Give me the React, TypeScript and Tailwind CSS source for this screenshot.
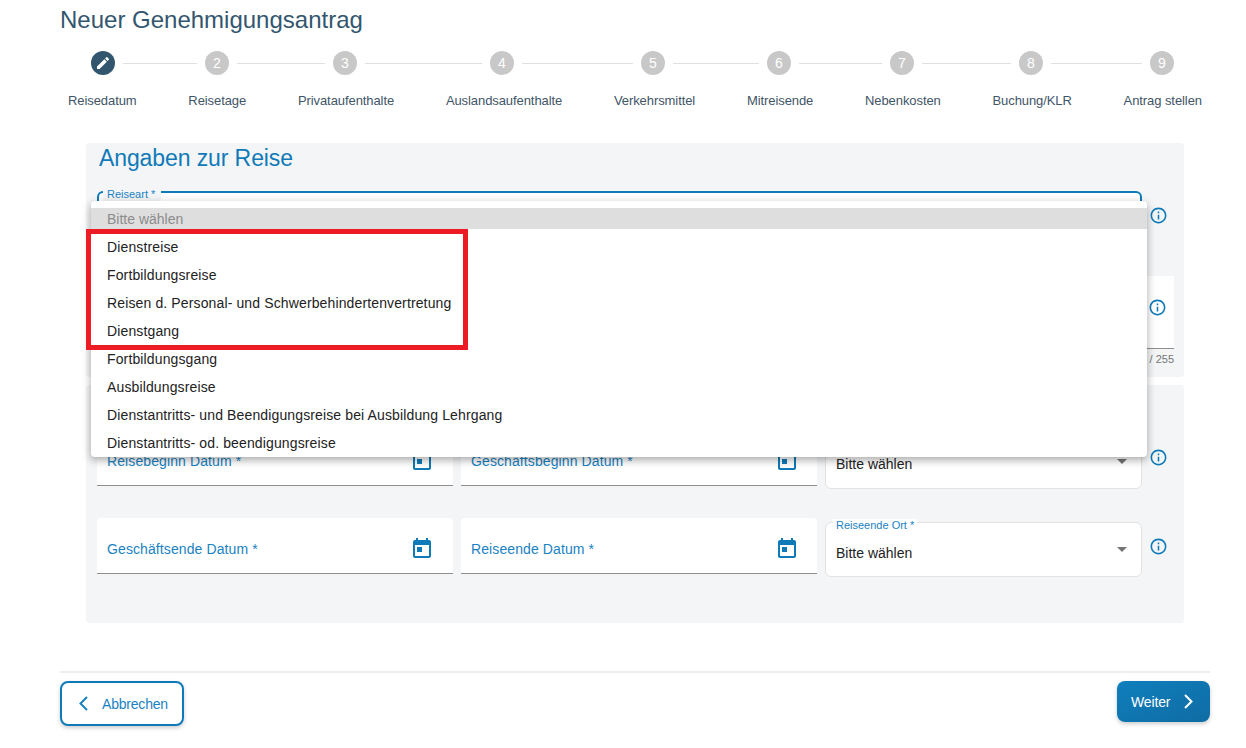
const font = "font-['Liberation_Sans',Arial,sans-serif]";

const steps = [
  { label: 'Reisedatum', line: 'w-[74px]' },
  { label: 'Reisetage', line: 'w-[88px]' },
  { label: 'Privataufenthalte', line: 'w-[117px]' },
  { label: 'Auslandsaufenthalte', line: 'w-[111px]' },
  { label: 'Verkehrsmittel', line: 'w-[86px]' },
  { label: 'Mitreisende', line: 'w-[83px]' },
  { label: 'Nebenkosten', line: 'w-[89px]' },
  { label: 'Buchung/KLR', line: 'w-[91px]' },
  { label: 'Antrag stellen', line: '' },
];

const options = [
  'Dienstreise',
  'Fortbildungsreise',
  'Reisen d. Personal- und Schwerbehindertenvertretung',
  'Dienstgang',
  'Fortbildungsgang',
  'Ausbildungsreise',
  'Dienstantritts- und Beendigungsreise bei Ausbildung Lehrgang',
  'Dienstantritts- od. beendigungsreise',
];

function InfoIcon() {
  return (
    <svg width="19" height="19" viewBox="0 0 24 24" fill="#0f7ab8" className="shrink-0">
      <path d="M11 7h2v2h-2zm0 4h2v6h-2zm1-9C6.48 2 2 6.48 2 12s4.48 10 10 10 10-4.48 10-10S17.52 2 12 2zm0 18c-4.41 0-8-3.59-8-8s3.59-8 8-8 8 3.59 8 8-3.59 8-8 8z" />
    </svg>
  );
}

function DateField({ label, right = 'pr-[19px]' }: { label: string; right?: string }) {
  return (
    <div className={`flex h-14 w-[356px] items-center justify-between rounded-t border-b border-[#8f8f8f] bg-white pt-[6px] pl-2.5 ${right}`}>
      <span className="text-sm tracking-[0.1px] text-[#1a82c2]">{label}</span>
      <svg width="24" height="24" viewBox="0 0 24 24" fill="#0f7ab8">
        <path d="M19 3h-1V1h-2v2H8V1H6v2H5c-1.11 0-1.99.9-1.99 2L3 19c0 1.1.89 2 2 2h14c1.1 0 2-.9 2-2V5c0-1.1-.9-2-2-2zm0 16H5V8h14v11zM7 10h5v5H7z" />
      </svg>
    </div>
  );
}

function SelectField({ label, infoTop = 'mt-3.5', textTop = 'mt-[7px]' }: { label: string; infoTop?: string; textTop?: string }) {
  return (
    <div className="mt-1 flex items-start gap-[7px]">
      <div className="relative flex h-[55px] w-[317px] items-center justify-between rounded-md border border-[#e2e2e2] bg-white pl-2.5 pr-3.5">
        <span className="absolute -top-[4px] left-[7px] bg-white px-[3px] text-[11px] leading-[13px] text-[#1a82c2]">
          {label}
        </span>
        <span className={`${textTop} text-sm text-[#222222]`}>Bitte wählen</span>
        <span className="h-0 w-0 border-x-[5px] border-t-[5px] border-x-transparent border-t-[#757575]" />
      </div>
      <div className={infoTop}>
        <InfoIcon />
      </div>
    </div>
  );
}

export default function App() {
  return (
    <div className={`${font} h-[748px] overflow-hidden bg-white px-[36px] pl-[60px]`}>
      <h1 className="pt-[5px] text-2xl leading-[30px] text-[#33566f]">Neuer Genehmigungsantrag</h1>

      <div className="mt-[16px] flex items-center pl-[31px]">
        {steps.map((step, i) => (
          <div key={step.label} className="flex items-center">
            <div
              className={`flex h-6 w-6 items-center justify-center rounded-full text-sm text-white ${
                i === 0 ? 'bg-[#33566f]' : 'bg-[#c8c8c8]'
              }`}
            >
              {i === 0 ? (
                <svg width="16" height="16" viewBox="0 0 24 24" fill="white">
                  <path d="M3 17.25V21h3.75L17.81 9.94l-3.75-3.75L3 17.25zM20.71 7.04c.39-.39.39-1.02 0-1.41l-2.34-2.34c-.39-.39-1.02-.39-1.41 0l-1.83 1.83 3.75 3.75 1.83-1.83z" />
                </svg>
              ) : (
                i + 1
              )}
            </div>
            {step.line && <div className={`mx-2 h-px bg-[#e0e0e0] ${step.line}`} />}
          </div>
        ))}
      </div>

      <div className="mt-[18px] ml-2 flex w-[1134px] justify-between text-[13px] leading-4 tracking-[-0.08px] whitespace-nowrap text-[#3f5568]">
        {steps.map((step) => (
          <span key={step.label}>{step.label}</span>
        ))}
      </div>

      <div className="mt-[34px] ml-[26px] w-[1098px]">
        <section className="relative h-[234px] rounded bg-[#f4f5f7] pl-[11px]">
          <h2 className="pl-[2px] text-[23px] leading-[30px] tracking-[-0.1px] text-[#107ab8]">Angaben zur Reise</h2>

          <div className="mt-[18px] flex items-start gap-[7px]">
            <div className="relative h-[55px] w-[1045px] rounded-md border-2 border-[#0f7ab8] bg-white">
              <span className="absolute -top-[5px] left-1 bg-[#f4f5f7] pr-[6px] pl-1 text-[11px] leading-[13px] text-[#1a82c2]">
                Reiseart *
              </span>
            </div>
            <div className="mt-[15px]">
              <InfoIcon />
            </div>
          </div>

          <div className="mt-[30px] flex h-[73px] w-[1077px] justify-end border-b border-[#8f8f8f] bg-white pt-[22px] pr-[7px]">
            <InfoIcon />
          </div>
          <div className="mt-1 w-[1077px] text-right text-[11px] leading-[13px] text-[#757575]">0 / 255</div>

          <div className="absolute top-[58px] left-[5px] z-10 h-[256px] w-[1056px] rounded bg-white pt-[7px] text-sm leading-7 text-[#222222] shadow-[0_3px_8px_rgba(0,0,0,0.35)]">
            <div className="mb-1 h-[21px] bg-[#dedede] pt-px pl-4 leading-[21px] text-[#8c8c8c]">Bitte wählen</div>
            {options.map((option) => (
              <div key={option} className="h-7 pl-4 tracking-[0.13px]">
                {option}
              </div>
            ))}
          </div>

          <div className="absolute top-[86px] left-0 z-20 h-[121px] w-[382px] border-[5px] border-[#ed1c24]" />
        </section>

        <section className="mt-2 h-[238px] rounded bg-[#f4f5f7] pt-[45px] pl-[11px]">
          <div className="flex items-start gap-2">
            <DateField label="Reisebeginn Datum *" />
            <DateField label="Geschäftsbeginn Datum *" right="pr-[18px]" />
            <SelectField label="Reisebeginn Ort *" textTop="mt-[5px]" />
          </div>
          <div className="mt-[29px] flex items-start gap-2">
            <DateField label="Geschäftsende Datum *" />
            <DateField label="Reiseende Datum *" right="pr-[18px]" />
            <SelectField label="Reiseende Ort *" infoTop="mt-[15px]" />
          </div>
        </section>
      </div>

      <div className="mt-[48px] w-[1150px] border-t-2 border-[#eeeeee] pt-2">
        <div className="flex items-start justify-between">
          <button className="flex h-[45px] w-[124px] items-center gap-[14px] rounded-lg border-2 border-[#0f7ab8] bg-white pl-[17px] text-sm tracking-[-0.2px] text-[#1a82c2] shadow-[0_2px_4px_rgba(0,0,0,0.2)]">
            <svg width="9" height="15" viewBox="0 0 9 15" fill="none" stroke="#1a82c2" strokeWidth="2">
              <path d="M8 1 1.5 7.5 8 14" />
            </svg>
            Abbrechen
          </button>
          <button className="flex h-[41px] w-[93px] items-center gap-[14px] rounded-lg bg-gradient-to-br from-[#0f7fbd] to-[#0f6ca3] pl-[14px] text-sm tracking-[-0.15px] text-white shadow-[0_2px_4px_rgba(0,0,0,0.2)]">
            Weiter
            <svg width="9" height="15" viewBox="0 0 9 15" fill="none" stroke="white" strokeWidth="2">
              <path d="M1 1l6.5 6.5L1 14" />
            </svg>
          </button>
        </div>
      </div>
    </div>
  );
}
